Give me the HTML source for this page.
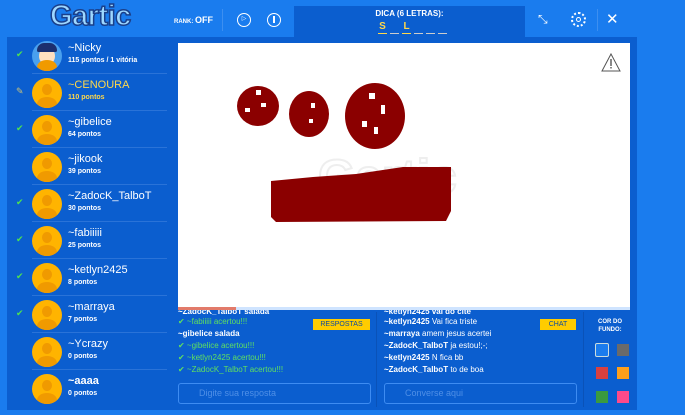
<!DOCTYPE html>
<html><head><style>
*{margin:0;padding:0;box-sizing:border-box}
body{width:685px;height:415px;overflow:hidden;background:#1a7cee;font-family:"Liberation Sans",sans-serif;position:relative;color:#fff}
.abs{position:absolute}
.panel{left:7px;top:37px;width:630px;height:373px;background:#0b5ecf}
.dica{left:294px;top:6px;width:231px;height:31px;background:#0b5ecf;text-align:center;font-size:8px;font-weight:bold}
.row{position:absolute;left:0;width:160px;height:37px}
.av{position:absolute;left:25px;top:4px;width:30px;height:30px;border-radius:50%;background:#ffb400;overflow:hidden}
.av:before{content:"";position:absolute;left:10px;top:6px;width:10px;height:11px;border-radius:50%;background:#f09a00}
.av:after{content:"";position:absolute;left:5px;top:19px;width:20px;height:14px;border-radius:50%;background:#f09a00}
.nm{position:absolute;left:61px;top:5px;font-size:11px}
.pt{position:absolute;left:61px;top:20px;font-size:7px;font-weight:bold}
.sep{position:absolute;left:25px;right:0;bottom:0;height:1px;background:#2a73d8}
.ck{position:absolute;left:9px;top:12px;color:#4ee34e;font-size:9px}
.msg{font-size:8px;font-weight:bold;height:12px;line-height:12px;white-space:nowrap}
.g{color:#5fe05f;font-weight:normal}
.sw{position:absolute;width:12px;height:12px}
.lt{position:absolute;top:15px;width:9px;height:13px;font-size:10px;color:#ffd84a;border-bottom:1.5px solid #ffd84a;line-height:12px}
.lt.e{border-color:#ccc}
</style></head><body>
<div class="abs" style="left:50px;top:0px;font-size:29px;font-weight:bold;color:#9fd8ff;-webkit-text-stroke:1.5px #1a3f8a;font-family:'Liberation Sans',sans-serif;letter-spacing:-0.5px">Gartic</div>
<div class="abs" style="left:174px;top:15px;font-size:6px;font-weight:bold">RANK: <span style="font-size:9px">OFF</span></div>
<div class="abs" style="left:222px;top:9px;width:1px;height:22px;background:#3d8ff0"></div>
<div class="abs" style="left:237px;top:13px;width:14px;height:14px;border:1.5px solid #fff;border-radius:50%;font-size:6px;text-align:center;line-height:11px">▷</div>
<div class="abs" style="left:267px;top:13px;width:14px;height:14px;border:1.5px solid #fff;border-radius:50%"><div style="margin:2px auto;width:1.5px;height:7px;background:#fff"></div></div>
<div class="abs dica"><div style="margin-top:3px">DICA (6 LETRAS):</div>
<span class="lt" style="left:84px">S</span><span class="lt e" style="left:96px"></span><span class="lt" style="left:108px">L</span><span class="lt e" style="left:120px"></span><span class="lt e" style="left:132px"></span><span class="lt e" style="left:144px"></span></div>
<div class="abs" style="left:538px;top:12px;font-size:12px">⤡</div>
<div class="abs" style="left:571px;top:12px;width:15px;height:15px;border:2px dotted #fff;border-radius:50%"><div style="margin:3px;width:5px;height:5px;border:1.5px solid #fff;border-radius:50%"></div></div>
<div class="abs" style="left:597px;top:9px;width:1px;height:22px;background:#3d8ff0"></div>
<div class="abs" style="left:606px;top:10px;font-size:15px">✕</div>
<div class="abs panel"></div>
<div class="abs" style="left:7px;top:37px;width:160px;height:373px">
<div class="row" style="top:0"><span class="ck">✔</span><div class="av" style="background:#4aa0ee"><div style="position:absolute;left:7px;top:6px;width:16px;height:18px;border-radius:50%;background:#ffe0c0"></div><div style="position:absolute;left:5px;top:2px;width:20px;height:9px;border-radius:9px 9px 2px 2px;background:#1c2f6e"></div><div style="position:absolute;left:8px;top:24px;width:14px;height:8px;background:#ff7a1a"></div></div><div class="nm">~Nicky</div><div class="pt">115 pontos / 1 vitória</div><div class="sep"></div></div>
<div class="row" style="top:37px"><span class="ck" style="color:#c9c27a">✎</span><div class="av"></div><div class="nm" style="color:#ffd84a">~CENOURA</div><div class="pt" style="color:#ffd84a">110 pontos</div><div class="sep"></div></div>
<div class="row" style="top:74px"><span class="ck">✔</span><div class="av"></div><div class="nm">~gibelice</div><div class="pt">64 pontos</div><div class="sep"></div></div>
<div class="row" style="top:111px"><div class="av"></div><div class="nm">~jikook</div><div class="pt">39 pontos</div><div class="sep"></div></div>
<div class="row" style="top:148px"><span class="ck">✔</span><div class="av"></div><div class="nm">~ZadocK_TalboT</div><div class="pt">30 pontos</div><div class="sep"></div></div>
<div class="row" style="top:185px"><span class="ck">✔</span><div class="av"></div><div class="nm">~fabiiiii</div><div class="pt">25 pontos</div><div class="sep"></div></div>
<div class="row" style="top:222px"><span class="ck">✔</span><div class="av"></div><div class="nm">~ketlyn2425</div><div class="pt">8 pontos</div><div class="sep"></div></div>
<div class="row" style="top:259px"><span class="ck">✔</span><div class="av"></div><div class="nm">~marraya</div><div class="pt">7 pontos</div><div class="sep"></div></div>
<div class="row" style="top:296px"><div class="av"></div><div class="nm">~Ycrazy</div><div class="pt">0 pontos</div><div class="sep"></div></div>
<div class="row" style="top:333px"><div class="av"></div><div class="nm" style="font-weight:bold">~aaaa</div><div class="pt">0 pontos</div></div>
</div>
<div class="abs" style="left:178px;top:43px;width:452px;height:267px;background:#fff">
<svg width="452" height="267" style="position:absolute;left:0;top:0">
<text x="140" y="150" font-size="48" font-weight="bold" fill="none" stroke="#eee" stroke-width="2" font-family="Liberation Sans">Gartic</text>
<ellipse cx="80" cy="63" rx="21" ry="20" fill="#8b0000"/>
<ellipse cx="131" cy="71" rx="20" ry="23" fill="#8b0000"/>
<ellipse cx="197" cy="73" rx="30" ry="33" fill="#8b0000"/>
<g fill="#fff"><rect x="78" y="47" width="5" height="5"/><rect x="83" y="60" width="5" height="4"/><rect x="67" y="65" width="5" height="4"/><rect x="133" y="60" width="4" height="5"/><rect x="131" y="76" width="4" height="4"/><rect x="191" y="50" width="6" height="6"/><rect x="203" y="62" width="4" height="9"/><rect x="184" y="78" width="5" height="6"/><rect x="196" y="84" width="4" height="7"/></g>
<path d="M93 138 L135 134 L178 131 L225 124 L273 124 L273 168 L268 178 L98 179 L93 174 Z" fill="#8b0000"/>
<g transform="translate(423,10)"><path d="M10 1 L19 18 L1 18 Z" fill="none" stroke="#555" stroke-width="1"/><rect x="9.3" y="6" width="1.4" height="7" fill="#555"/><rect x="9.3" y="14" width="1.4" height="1.5" fill="#555"/></g>
</svg>
<div style="position:absolute;left:0;bottom:0;width:452px;height:3px;background:#cfe4ff"></div>
<div style="position:absolute;left:0;bottom:0;width:58px;height:3px;background:#e27a6a"></div>
</div>
<div class="abs" style="left:178px;top:310px;width:194px">
<div class="msg" style="height:6px;line-height:4px;overflow:hidden">~ZadocK_TalboT salada</div>
<div class="msg g">✔ ~fabiiiii acertou!!!</div>
<div class="msg">~gibelice salada</div>
<div class="msg g">✔ ~gibelice acertou!!!</div>
<div class="msg g">✔ ~ketlyn2425 acertou!!!</div>
<div class="msg g">✔ ~ZadocK_TalboT acertou!!!</div>
</div>
<div class="abs" style="left:313px;top:319px;width:57px;height:11px;background:#ffcc00;color:#0b4aa0;font-size:7px;text-align:center;line-height:11px">RESPOSTAS</div>
<div class="abs" style="left:178px;top:383px;width:193px;height:21px;border:1px solid #3e8cf2;border-radius:3px;color:#4f8fe6;font-size:9px;line-height:19px;padding-left:20px">Digite sua resposta</div>
<div class="abs" style="left:376px;top:312px;width:1px;height:95px;background:#0a52b8"></div>
<div class="abs" style="left:384px;top:310px;width:194px">
<div class="msg" style="height:6px;line-height:4px;overflow:hidden">~ketlyn2425 vai do cite</div>
<div class="msg">~ketlyn2425 <span style="font-weight:normal">Vai fica triste</span></div>
<div class="msg">~marraya <span style="font-weight:normal">amem jesus acertei</span></div>
<div class="msg">~ZadocK_TalboT <span style="font-weight:normal">ja estou!;-;</span></div>
<div class="msg">~ketlyn2425 <span style="font-weight:normal">N fica bb</span></div>
<div class="msg">~ZadocK_TalboT <span style="font-weight:normal">to de boa</span></div>
</div>
<div class="abs" style="left:540px;top:319px;width:36px;height:11px;background:#ffcc00;color:#0b4aa0;font-size:7px;text-align:center;line-height:11px">CHAT</div>
<div class="abs" style="left:384px;top:383px;width:193px;height:21px;border:1px solid #3e8cf2;border-radius:3px;color:#4f8fe6;font-size:9px;line-height:19px;padding-left:20px">Converse aqui</div>
<div class="abs" style="left:583px;top:312px;width:1px;height:95px;background:#0a52b8"></div>
<div class="abs" style="left:590px;top:318px;width:40px;text-align:center;font-size:6px;font-weight:bold;line-height:8px">COR DO<br>FUNDO:</div>
<div class="sw" style="left:595px;top:343px;width:14px;height:14px;background:#1a7cee;border:1.5px solid #cdd;border-radius:2px"></div>
<div class="sw" style="left:617px;top:344px;background:#6a6a6a"></div>
<div class="sw" style="left:596px;top:367px;background:#d94040"></div>
<div class="sw" style="left:617px;top:367px;background:#ff9f1a"></div>
<div class="sw" style="left:596px;top:391px;background:#3a9a40"></div>
<div class="sw" style="left:617px;top:391px;background:#ff4a8a"></div>
</body></html>
